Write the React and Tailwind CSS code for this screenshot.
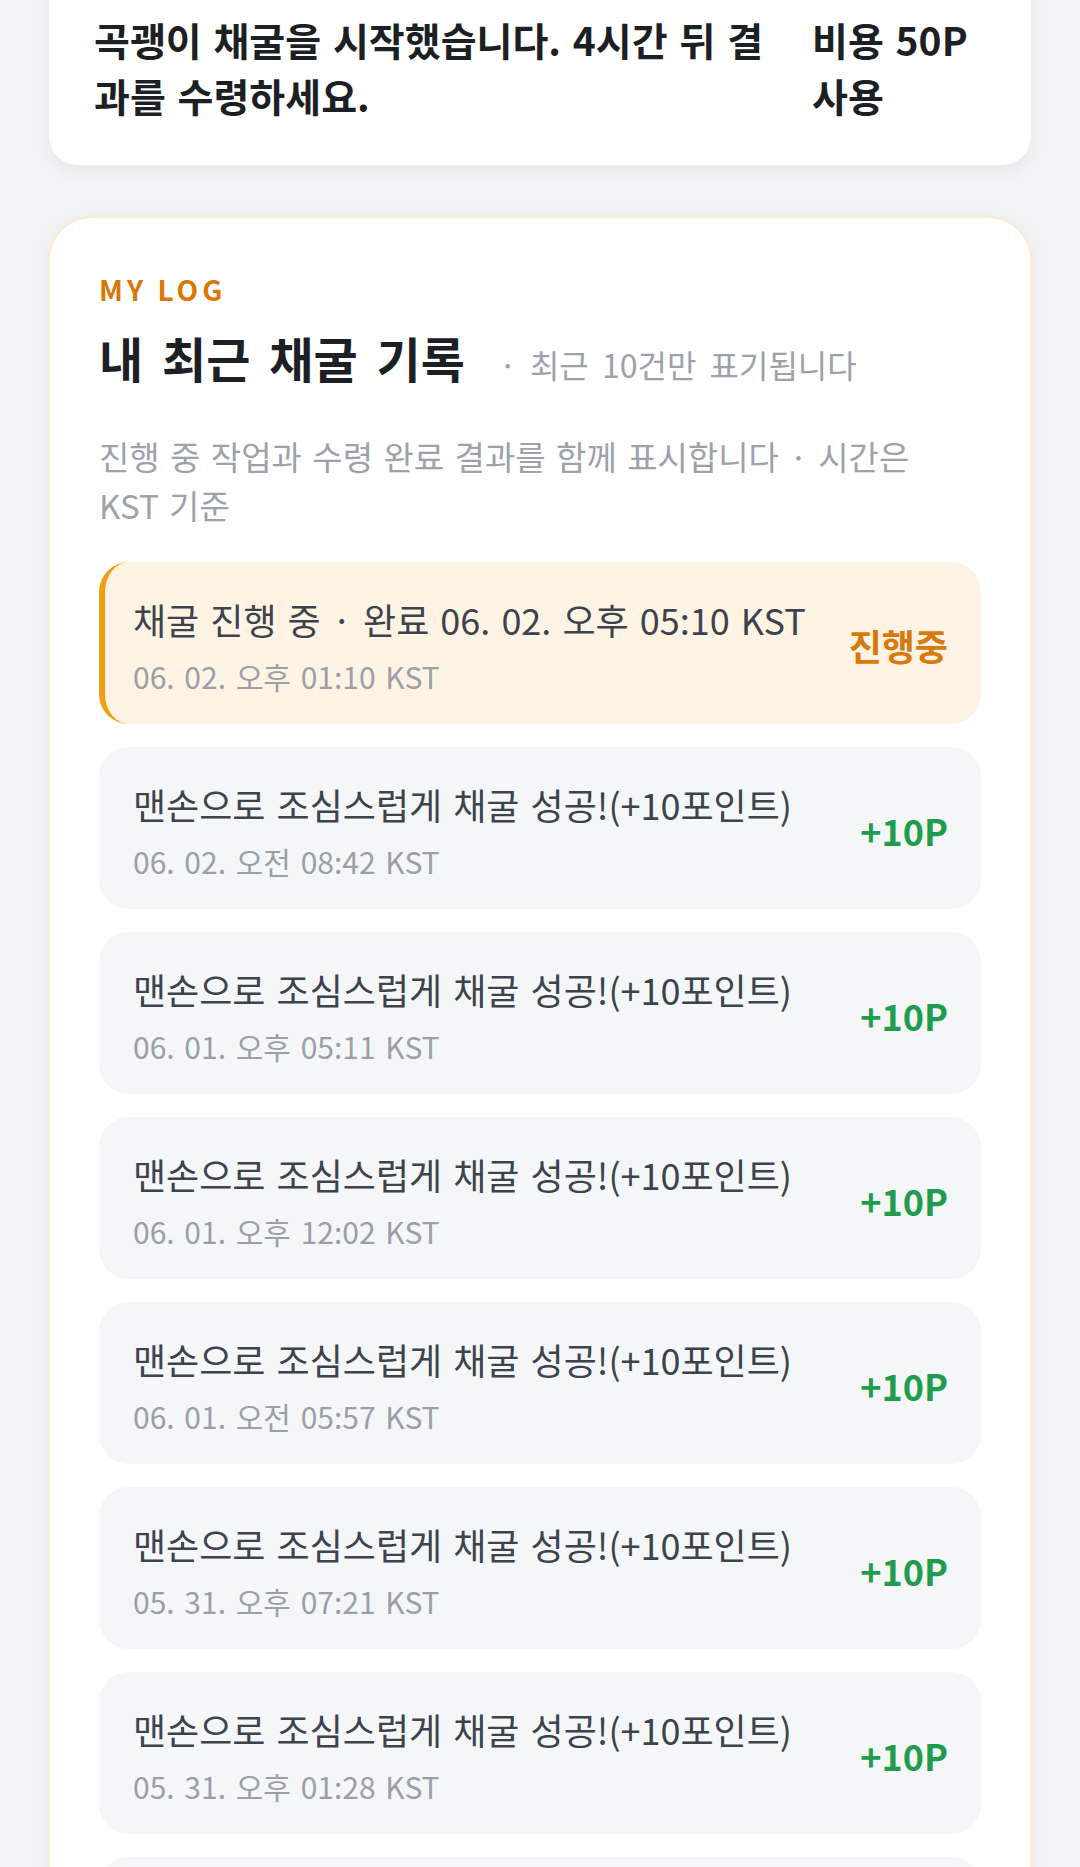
import React from "react";

const items = [
  { title: "채굴 진행 중 · 완료 06. 02. 오후 05:10 KST", date: "06. 02. 오후 01:10 KST", progress: true },
  { title: "맨손으로 조심스럽게 채굴 성공!(+10포인트)", date: "06. 02. 오전 08:42 KST" },
  { title: "맨손으로 조심스럽게 채굴 성공!(+10포인트)", date: "06. 01. 오후 05:11 KST" },
  { title: "맨손으로 조심스럽게 채굴 성공!(+10포인트)", date: "06. 01. 오후 12:02 KST" },
  { title: "맨손으로 조심스럽게 채굴 성공!(+10포인트)", date: "06. 01. 오전 05:57 KST" },
  { title: "맨손으로 조심스럽게 채굴 성공!(+10포인트)", date: "05. 31. 오후 07:21 KST" },
  { title: "맨손으로 조심스럽게 채굴 성공!(+10포인트)", date: "05. 31. 오후 01:28 KST" },
  { title: "맨손으로 조심스럽게 채굴 성공!(+10포인트)", date: "05. 30. 오후 08:15 KST" },
];

function Item({ title, date, progress }) {
  return (
    <div
      className={
        progress
          ? "flex items-center justify-between rounded-[30px] border-l-[6px] border-[#f29d12] bg-[#fff3e3] pl-[28px] pr-[33px] pt-[32px] pb-[28px]"
          : "flex items-center justify-between rounded-[30px] bg-[#f5f6f8] pl-[34px] pr-[33px] pt-[32px] pb-[28px]"
      }
    >
      <div className="flex min-w-0 flex-col gap-[12px]">
        <div className="whitespace-nowrap text-[36px] leading-[50px] text-[#3d434d] [word-spacing:3px]">{title}</div>
        <div className="whitespace-nowrap text-[30px] leading-[40px] text-[#9a9fa8] [word-spacing:3px]">{date}</div>
      </div>
      {progress ? (
        <div className="shrink-0 text-[36px] font-bold leading-[44px] text-[#d67a0b]">진행중</div>
      ) : (
        <div className="shrink-0 text-[36px] font-bold leading-[44px] text-[#1f9d4c]">+10P</div>
      )}
    </div>
  );
}

export default function App() {
  return (
    <div className="h-[1867px] overflow-hidden bg-[#f2f3f5] px-[48px] font-['Noto_Sans_CJK_KR','Noto_Sans',sans-serif]">
      <div className="-mt-[30px] rounded-[30px] border border-[#eceef1] bg-white px-[45px] pt-[40px] pb-[42px] shadow-[0_6px_16px_rgba(0,0,0,0.05)]">
        <div className="flex gap-[36px]">
          <div className="flex-1 text-[39px] font-bold leading-[56px] text-[#1c1f24] [word-spacing:3px]">
            곡괭이 채굴을 시작했습니다. 4시간 뒤 결과를 수령하세요.
          </div>
          <div className="w-[174px] shrink-0 text-[39px] font-bold leading-[56px] text-[#1c1f24] [word-spacing:3px]">
            비용 50P 사용
          </div>
        </div>
      </div>

      <div className="mt-[50px] rounded-[44px] border-2 border-[#fcecc9] bg-white px-[49px] pt-[53px] pb-[40px] shadow-[0_4px_24px_rgba(0,0,0,0.04)]">
        <div className="text-[28px] font-bold leading-[36px] tracking-[4px] text-[#d97706]">MY LOG</div>
        <div className="mt-[20px] flex items-baseline gap-[34px]">
          <div className="text-[48px] font-bold leading-[60px] text-[#1c1f24] [word-spacing:8px]">내 최근 채굴 기록</div>
          <div className="text-[32px] leading-[44px] text-[#9ca1aa] [word-spacing:6px]">· 최근 10건만 표기됩니다</div>
        </div>
        <div className="mt-[45px] pr-[24px] text-[33px] leading-[49px] text-[#9ca1aa] [word-spacing:3px]">
          진행 중 작업과 수령 완료 결과를 함께 표시합니다 · 시간은 KST 기준
        </div>
        <div className="mt-[32px] flex flex-col gap-[23px]">
          {items.map((it, i) => (
            <Item key={i} {...it} />
          ))}
        </div>
      </div>
    </div>
  );
}
